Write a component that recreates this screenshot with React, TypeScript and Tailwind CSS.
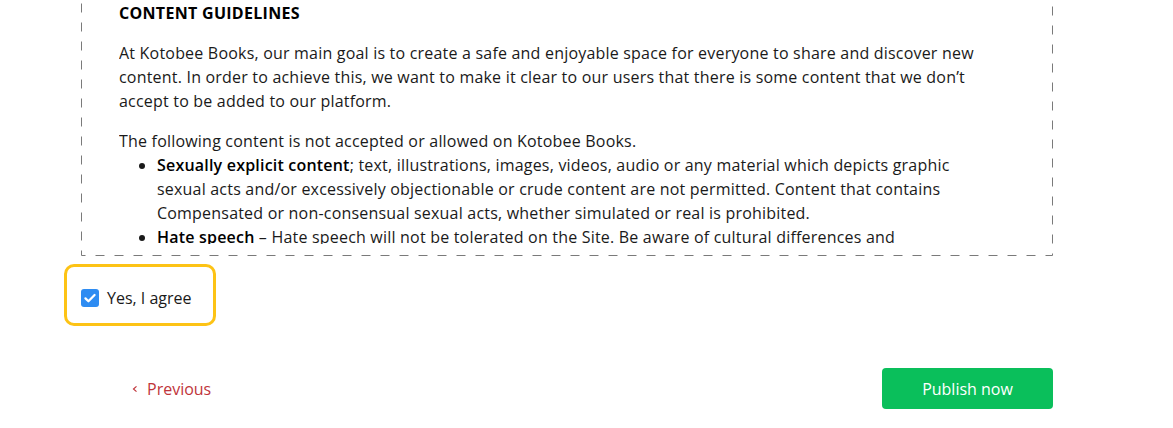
import React from 'react';

const Guidelines = () => (
  <div className="relative ml-[81px] -mt-[30px] w-[972px] pt-[31px] pl-[38px] pr-[72px] pb-[12px]">
    <svg className="pointer-events-none absolute inset-0 h-full w-full" preserveAspectRatio="none">
      <rect x="0.5" y="0.5" width="971" height="285" fill="none" stroke="#7a7a7a" strokeWidth="1" strokeDasharray="9 10" />
    </svg>
    <div className="h-[243px] overflow-hidden text-[16px] leading-6 tracking-[0.2px] text-[#1a1a1a]">
      <h3 className="mb-4 text-[16px] font-bold tracking-[0.3px] text-black">CONTENT GUIDELINES</h3>
      <p className="mb-4">
        At Kotobee Books, our main goal is to create a safe and enjoyable space for everyone to share and discover new
        content. In order to achieve this, we want to make it clear to our users that there is some content that we don’t
        accept to be added to our platform.
      </p>
      <p>The following content is not accepted or allowed on Kotobee Books.</p>
      <ul className="list-disc pl-[38px]">
        <li>
          <strong className="font-semibold text-black">Sexually explicit content</strong>; text, illustrations, images, videos, audio or any
          material which depicts graphic sexual acts and/or excessively objectionable or crude content are not permitted.
          Content that contains Compensated or non-consensual sexual acts, whether simulated or real is prohibited.
        </li>
        <li>
          <strong className="font-semibold text-black">Hate speech</strong> – Hate speech will not be tolerated on the Site. Be aware of
          cultural differences and
          <br />
          avoid content that may be offensive to particular groups of people.
        </li>
      </ul>
    </div>
  </div>
);

const Agree = () => (
  <div className="ml-[64px] mt-[8px] flex h-[62px] w-[152px] items-center gap-2 rounded-[10px] border-[3px] border-[#fdc315] pl-[14px] pt-[6px]">
    <span className="flex h-[18px] w-[18px] items-center justify-center rounded-[3px] bg-[#2e8cf2]">
      <svg viewBox="0 0 16 16" className="h-[14px] w-[14px]" fill="none" stroke="white" strokeWidth="2.6" strokeLinecap="round" strokeLinejoin="round">
        <path d="M2.8 8.4l3.4 3.3L13.2 4.6" />
      </svg>
    </span>
    <span className="text-[16px] text-[#1a1a1a]">Yes, I agree</span>
  </div>
);

export default function App() {
  return (
    <div className="h-[428px] w-[1173px] overflow-hidden bg-white" style={{ fontFamily: '"Open Sans", "Liberation Sans", sans-serif' }}>
      <Guidelines />
      <Agree />
      <div className="ml-[132px] mt-[42px] flex w-[921px] items-center justify-between">
        <button className="flex items-center gap-[9px] text-[16px] text-[#c0353a]">
          <svg viewBox="0 0 8 10" className="h-[10px] w-[6px]" fill="none" stroke="currentColor" strokeWidth="1.6">
            <path d="M6 1.5L2 5l4 3.5" />
          </svg>
          Previous
        </button>
        <button className="h-[41px] w-[171px] rounded-[4px] bg-[#0abf5b] text-[16px] text-white">Publish now</button>
      </div>
    </div>
  );
}
